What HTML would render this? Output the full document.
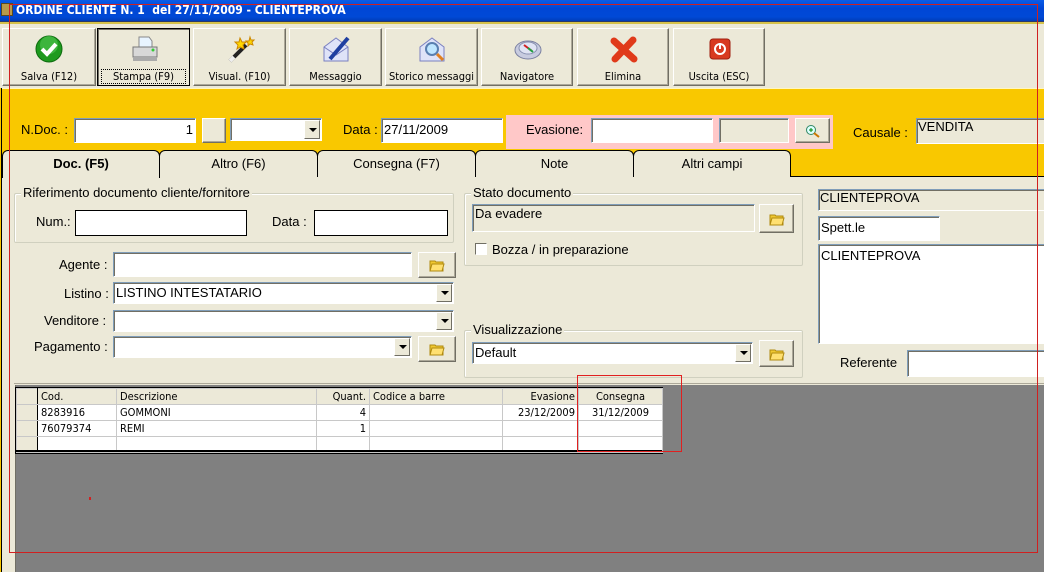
<!DOCTYPE html>
<html><head><meta charset="utf-8">
<style>
*{box-sizing:border-box;margin:0;padding:0}
body{width:1044px;height:572px;position:relative;overflow:hidden;background:#ECE9D8;font-family:"Liberation Sans",sans-serif;font-size:12px;color:#000}
.a{position:absolute}
.btn{position:absolute;top:28px;height:58px;background:#ECE9D8;border:1px solid;border-color:#fff #716F64 #716F64 #fff;box-shadow:inset -1px -1px 0 #ACA899;text-align:center;font-size:11px;font-family:"DejaVu Sans Condensed","Liberation Sans Narrow","Liberation Sans",sans-serif}
.btn span{position:absolute;left:0;right:0;top:41px}
.btn svg{position:absolute;left:50%;top:6px;margin-left:-14px}
.in{position:absolute;background:#fff;border:1px solid;border-color:#7F9DB9 #fff #fff #7F9DB9;box-shadow:inset 1px 1px 0 #716F64;font-size:13px;padding:1px 2px;white-space:nowrap}
.ro{background:#ECE9D8}
.lbl{position:absolute;font-size:13px;white-space:nowrap}
.dd{position:absolute;right:1px;top:1px;bottom:1px;width:16px;background:#ECE9D8;border:1px solid;border-color:#fff #716F64 #716F64 #fff}
.dd:after{content:"";position:absolute;left:4px;top:50%;margin-top:-2px;border:4px solid transparent;border-top:4px solid #000;border-bottom:0}
.fb{position:absolute;background:#ECE9D8;border:1px solid;border-color:#fff #716F64 #716F64 #fff;box-shadow:inset -1px -1px 0 #ACA899}
.fb svg{position:absolute;left:50%;top:50%;margin:-7px 0 0 -8px}
.grp{position:absolute;border:1px solid #D0D0BF;border-radius:2px;box-shadow:inset 1px 1px 0 #fff}
.grp b{position:absolute;top:-9px;left:6px;background:#ECE9D8;font-weight:normal;font-size:13px;padding:0 2px}
.tab{position:absolute;top:150px;height:27px;background:#ECE9D8;border:1px solid #000;border-bottom:none;border-radius:6px 6px 0 0;text-align:center;font-size:13px;line-height:25px}
table{border-collapse:collapse;font-family:"DejaVu Sans Condensed","Liberation Sans Narrow",sans-serif;font-size:11px}
td{border:1px solid #C8C8C8;height:16px;padding:0 3px;white-space:nowrap;overflow:hidden}
</style></head><body>
<!-- title bar -->
<div class="a" style="left:0;top:0;width:1044px;height:21px;background:linear-gradient(#0A5CE8,#0046D5 40%,#0049D6 80%,#003CB8)"></div>
<div class="a" style="left:0;top:21px;width:1044px;height:3px;background:#D6C24A;border-top:1px solid #2a3a6a"></div>
<div class="a" style="left:1px;top:3px;width:12px;height:13px;background:#B89A4A;border:1px solid #5a4a20"></div>
<div class="a" style="left:16px;top:3px;color:#fff;font-weight:bold;font-size:12px;font-family:'DejaVu Sans Condensed','Liberation Sans',sans-serif;white-space:nowrap">ORDINE CLIENTE N. 1 &nbsp;del 27/11/2009 - CLIENTEPROVA</div>

<!-- toolbar -->
<div class="btn" style="left:2px;width:94px"><svg width="28" height="28" viewBox="0 0 28 28"><circle cx="14" cy="14" r="13" fill="#1E9A1E" stroke="#0d6a0d"/><circle cx="14" cy="10" r="9" fill="#5CD05C" opacity=".5"/><path d="M7 14l5 5 9-10" stroke="#fff" stroke-width="4" fill="none"/></svg><span>Salva (F12)</span></div>
<div class="btn" style="left:97px;width:93px;border:1px solid #000;box-shadow:inset 1px 1px 0 #716F64"><svg width="30" height="28" viewBox="0 0 30 28"><path d="M9 2h10l3 4v8H9z" fill="#e8f4ff" stroke="#888"/><path d="M3 12h24v10H3z" fill="#d8d8d8" stroke="#777"/><path d="M3 22h24v4H3z" fill="#aaa"/><circle cx="23" cy="15" r="1.5" fill="#3c3"/></svg><span style="outline:1px dotted #000;left:4px;right:4px;top:41px">Stampa (F9)</span></div>
<div class="btn" style="left:193px;width:93px"><svg width="30" height="28" viewBox="0 0 30 28"><path d="M4 26L20 10" stroke="#222" stroke-width="4"/><path d="M4 26l4-4" stroke="#eee" stroke-width="4"/><path d="M14 3l2 4 4 0-3 3 1 4-4-2-3 2 1-4-3-3 4 0z" fill="#FFD700" stroke="#c80"/><path d="M24 2l1 3 3 0-2 2 1 3-3-1-2 2 0-3-2-2 3 0z" fill="#FFD700" stroke="#c80"/></svg><span>Visual. (F10)</span></div>
<div class="btn" style="left:289px;width:93px"><svg width="30" height="28" viewBox="0 0 30 28"><path d="M2 12l12-9 12 9v14H2z" fill="#dfe3f8" stroke="#7a80c0"/><path d="M2 12l12 8 12-8" fill="none" stroke="#7a80c0"/><path d="M8 24L26 3" stroke="#1f3fa0" stroke-width="4"/></svg><span>Messaggio</span></div>
<div class="btn" style="left:385px;width:93px"><svg width="30" height="28" viewBox="0 0 30 28"><path d="M2 12l12-9 12 9v14H2z" fill="#dfe3f8" stroke="#7a80c0"/><circle cx="14" cy="14" r="6" fill="#bfe6ff" stroke="#5a7fb0" stroke-width="2"/><path d="M19 19l6 6" stroke="#e08020" stroke-width="3"/></svg><span>Storico messaggi</span></div>
<div class="btn" style="left:481px;width:92px"><svg width="30" height="28" viewBox="0 0 30 28"><ellipse cx="15" cy="15" rx="13" ry="9" fill="#c8cce0" stroke="#7a80a0"/><ellipse cx="15" cy="13" rx="9" ry="6" fill="#e0e4f4" stroke="#8890b0"/><path d="M11 10l8 6" stroke="#d02020" stroke-width="2"/><path d="M15 13l5 4" stroke="#20a040" stroke-width="2"/></svg><span>Navigatore</span></div>
<div class="btn" style="left:577px;width:92px"><svg width="30" height="28" viewBox="0 0 30 28"><path d="M5 6L25 24M24 5L6 24" stroke="#E03A1A" stroke-width="7" stroke-linecap="round"/></svg><span>Elimina</span></div>
<div class="btn" style="left:673px;width:92px"><svg width="30" height="28" viewBox="0 0 30 28"><rect x="5" y="4" width="20" height="20" rx="3" fill="#D83A20" stroke="#a02010"/><circle cx="15" cy="14" r="5" fill="none" stroke="#fff" stroke-width="2"/><path d="M15 8v6" stroke="#fff" stroke-width="2"/></svg><span>Uscita (ESC)</span></div>

<!-- yellow header -->
<div class="a" style="left:0;top:88px;width:1044px;height:89px;background:#F9C800"></div>
<div class="a" style="left:0;top:88px;width:1044px;height:1px;background:#FFF6C0"></div>
<div class="lbl" style="left:21px;top:122px">N.Doc. :</div>
<div class="in" style="left:74px;top:118px;width:122px;height:25px;text-align:right;padding-top:3px">1</div>
<div class="fb" style="left:202px;top:118px;width:24px;height:25px"></div>
<div class="in" style="left:230px;top:118px;width:92px;height:23px"><div class="dd"></div></div>
<div class="lbl" style="left:343px;top:122px">Data :</div>
<div class="in" style="left:381px;top:118px;width:122px;height:25px;padding-top:3px">27/11/2009</div>
<div class="a" style="left:506px;top:115px;width:327px;height:34px;background:#FFC8C8"></div>
<div class="lbl" style="left:526px;top:122px">Evasione:</div>
<div class="in" style="left:591px;top:118px;width:122px;height:25px"></div>
<div class="in ro" style="left:719px;top:118px;width:70px;height:25px"></div>
<div class="fb" style="left:795px;top:118px;width:35px;height:25px"><svg width="16" height="14" viewBox="0 0 16 14"><circle cx="6" cy="6" r="4.5" fill="#dff" stroke="#386"/><path d="M4 6h4M6 4v4" stroke="#080"/><path d="M9 9l5 4" stroke="#c70" stroke-width="2"/></svg></div>
<div class="lbl" style="left:853px;top:125px">Causale :</div>
<div class="in ro" style="left:916px;top:118px;width:130px;height:26px;padding:0 1px">VENDITA</div>

<!-- tabs -->
<div class="a" style="left:0;top:176px;width:1044px;height:1px;background:#000"></div>
<div class="tab" style="left:2px;width:158px;height:28px;font-weight:bold;z-index:2">Doc. (F5)</div>
<div class="tab" style="left:159px;width:159px">Altro (F6)</div>
<div class="tab" style="left:317px;width:159px">Consegna (F7)</div>
<div class="tab" style="left:475px;width:159px">Note</div>
<div class="tab" style="left:633px;width:158px">Altri campi</div>

<!-- left strip -->
<div class="a" style="left:0;top:88px;width:2px;height:484px;background:#000;border-left:1px solid #F9C800"></div>

<!-- group riferimento -->
<div class="grp" style="left:14px;top:193px;width:440px;height:50px"><b>Riferimento documento cliente/fornitore</b></div>
<div class="lbl" style="left:36px;top:214px">Num.:</div>
<div class="in" style="left:75px;top:210px;width:172px;height:26px;border:1px solid #000;box-shadow:none"></div>
<div class="lbl" style="left:272px;top:214px">Data :</div>
<div class="in" style="left:314px;top:210px;width:134px;height:26px;border:1px solid #000;box-shadow:none"></div>

<div class="lbl" style="left:59px;top:257px">Agente :</div>
<div class="in" style="left:113px;top:252px;width:299px;height:25px"></div>
<div class="fb" style="left:418px;top:252px;width:38px;height:26px"><svg width="16" height="14" viewBox="0 0 16 14"><path d="M1 3h5l1 1h7v9H1z" fill="#f0c830" stroke="#b08a10"/><path d="M3 6h12l-2 7H1z" fill="#ffe070" stroke="#b08a10"/></svg></div>
<div class="lbl" style="left:64px;top:286px">Listino :</div>
<div class="in" style="left:113px;top:282px;width:341px;height:22px;padding-top:2px">LISTINO INTESTATARIO<div class="dd"></div></div>
<div class="lbl" style="left:44px;top:313px">Venditore :</div>
<div class="in" style="left:113px;top:310px;width:341px;height:22px"><div class="dd"></div></div>
<div class="lbl" style="left:34px;top:339px">Pagamento :</div>
<div class="in" style="left:113px;top:336px;width:299px;height:22px"><div class="dd"></div></div>
<div class="fb" style="left:418px;top:336px;width:38px;height:26px"><svg width="16" height="14" viewBox="0 0 16 14"><path d="M1 3h5l1 1h7v9H1z" fill="#f0c830" stroke="#b08a10"/><path d="M3 6h12l-2 7H1z" fill="#ffe070" stroke="#b08a10"/></svg></div>

<!-- stato -->
<div class="grp" style="left:464px;top:193px;width:339px;height:73px"><b>Stato documento</b></div>
<div class="in ro" style="left:472px;top:204px;width:283px;height:28px;padding:1px 2px">Da evadere</div>
<div class="fb" style="left:759px;top:204px;width:35px;height:29px"><svg width="16" height="14" viewBox="0 0 16 14"><path d="M1 3h5l1 1h7v9H1z" fill="#f0c830" stroke="#b08a10"/><path d="M3 6h12l-2 7H1z" fill="#ffe070" stroke="#b08a10"/></svg></div>
<div class="a" style="left:475px;top:243px;width:12px;height:12px;background:#fff;border:1px solid;border-color:#716F64 #fff #fff #716F64"></div>
<div class="lbl" style="left:492px;top:242px">Bozza / in preparazione</div>

<div class="grp" style="left:464px;top:330px;width:339px;height:48px"><b>Visualizzazione</b></div>
<div class="in" style="left:472px;top:342px;width:281px;height:22px;padding-top:2px">Default<div class="dd"></div></div>
<div class="fb" style="left:759px;top:340px;width:35px;height:27px"><svg width="16" height="14" viewBox="0 0 16 14"><path d="M1 3h5l1 1h7v9H1z" fill="#f0c830" stroke="#b08a10"/><path d="M3 6h12l-2 7H1z" fill="#ffe070" stroke="#b08a10"/></svg></div>

<!-- right -->
<div class="in ro" style="left:818px;top:189px;width:230px;height:22px;padding:0 1px">CLIENTEPROVA</div>
<div class="in" style="left:818px;top:216px;width:122px;height:25px;padding-top:3px">Spett.le</div>
<div class="in" style="left:818px;top:244px;width:230px;height:100px;padding-top:3px">CLIENTEPROVA</div>
<div class="lbl" style="left:840px;top:355px">Referente</div>
<div class="in" style="left:907px;top:350px;width:140px;height:27px"></div>

<!-- grey area -->
<div class="a" style="left:14px;top:383px;width:1030px;height:1px;background:#ACA899"></div>
<div class="a" style="left:15px;top:385px;width:1029px;height:187px;background:#808080;border-left:1px solid #716F64"></div>
<div class="a" style="left:15px;top:387px;background:#fff;border:1px solid #000;border-right:none">
<table>
<tr style="background:#ECE9D8"><td style="width:21px;border-right:1px solid #000"></td><td style="width:79px">Cod.</td><td style="width:200px">Descrizione</td><td style="width:53px;text-align:right">Quant.</td><td style="width:133px">Codice a barre</td><td style="width:76px;text-align:right">Evasione</td><td style="width:84px;text-align:center">Consegna</td></tr>
<tr><td style="background:#ECE9D8;border-right:1px solid #000"></td><td>8283916</td><td>GOMMONI</td><td style="text-align:right">4</td><td></td><td style="text-align:right">23/12/2009</td><td style="text-align:center">31/12/2009</td></tr>
<tr><td style="background:#ECE9D8;border-right:1px solid #000"></td><td>76079374</td><td>REMI</td><td style="text-align:right">1</td><td></td><td></td><td></td></tr>
<tr><td style="background:#ECE9D8;border-right:1px solid #000"></td><td></td><td></td><td></td><td></td><td></td><td></td></tr>
</table></div>
<div class="a" style="left:15px;top:450px;width:647px;height:2px;background:#000"></div>

<!-- red overlays -->
<div class="a" style="left:577px;top:375px;width:105px;height:77px;border:1px solid #E02020;z-index:5"></div>
<div class="a" style="left:9px;top:4px;width:1029px;height:549px;border:1px solid #D02020;z-index:5"></div>
<div class="a" style="left:89px;top:497px;width:2px;height:3px;background:#D02020"></div>
</body></html>
